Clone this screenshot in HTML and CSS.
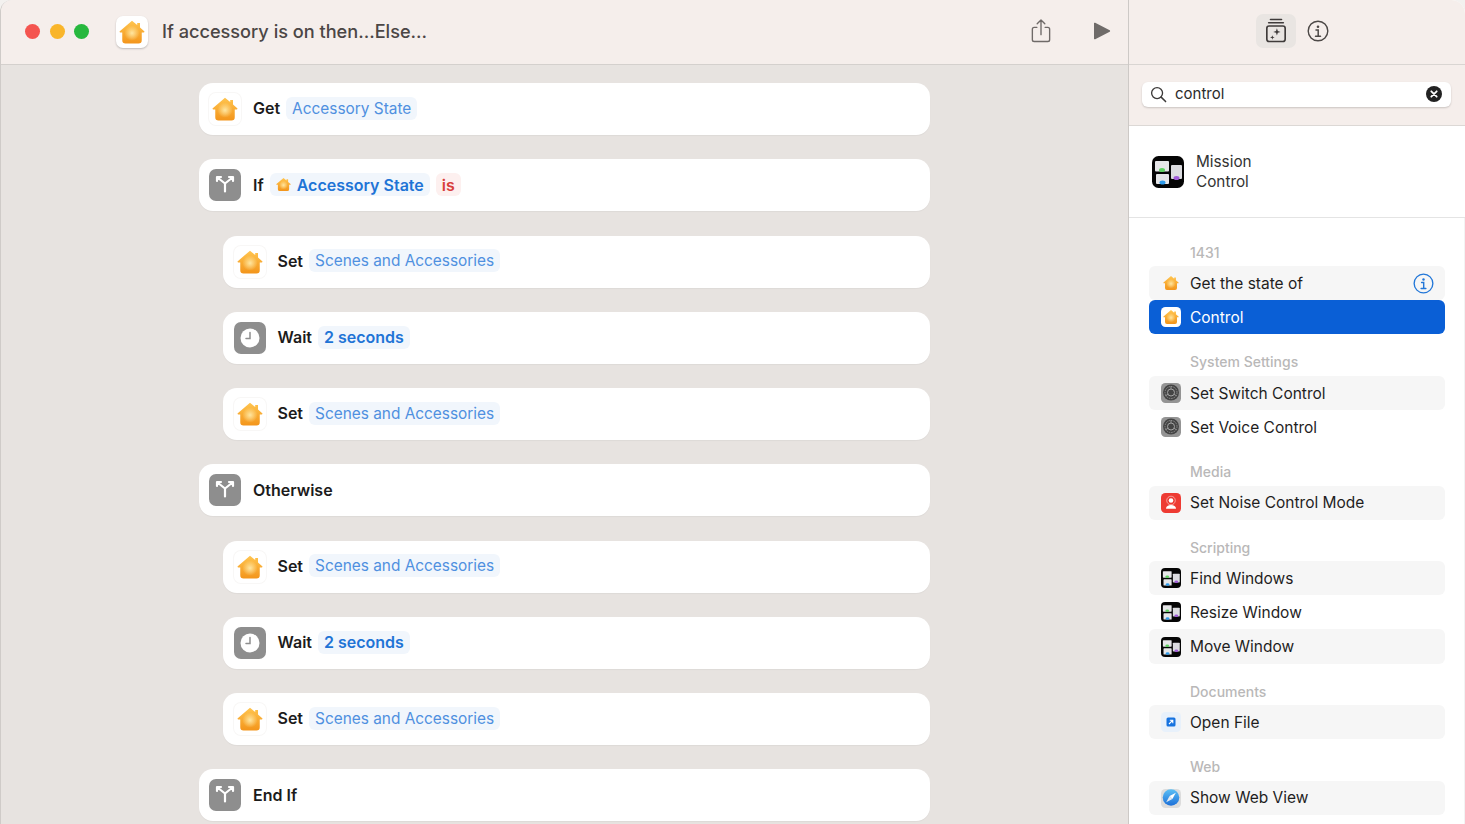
FILE: index.html
```html
<!DOCTYPE html>
<html lang="en">
<head>
<meta charset="utf-8">
<title>If accessory is on then...Else...</title>
<link rel="stylesheet" href="styles.css">
</head>
<body>
<svg class="sprite" aria-hidden="true">
  <defs>
    <linearGradient id="homeFill" x1="0" y1="0" x2="0" y2="1">
      <stop offset="0" stop-color="#ffc550"/>
      <stop offset="1" stop-color="#f3951b"/>
    </linearGradient>
    <radialGradient id="homeGlow" cx="0.5" cy="0.5" r="0.5">
      <stop offset="0" stop-color="#ffe6a0"/>
      <stop offset="1" stop-color="#ffe6a0" stop-opacity="0"/>
    </radialGradient>
    <linearGradient id="safariFill" x1="0" y1="0" x2="0" y2="1">
      <stop offset="0" stop-color="#5cc0f5"/>
      <stop offset="1" stop-color="#1c6fd8"/>
    </linearGradient>
  </defs>
  <symbol id="home" viewBox="0 0 24 24">
    <path fill="url(#homeFill)" d="M12 1.500 16.800 5.600V3.600h2.600v4.200l3.900 3.500a.7.7 0 0 1-.5 1.200H21V19.500a3 3 0 0 1-3 3H6a3 3 0 0 1-3-3v-7H1.200a.7.7 0 0 1-.5-1.200Z"/>
    <circle cx="12" cy="13" r="7" fill="url(#homeGlow)"/>
  </symbol>
  <symbol id="branch" viewBox="0 0 32 32">
    <path fill="none" stroke="#fff" stroke-width="2.200" stroke-linecap="round" stroke-linejoin="round" d="M16 22.500V14.500L8.500 8.500M16 14.500 23.500 8.500M8 12V8h4M24 12V8h-4"/>
  </symbol>
  <symbol id="clock" viewBox="0 0 32 32">
    <circle cx="16" cy="16" r="9.500" fill="#fff"/>
    <path fill="none" stroke="#8e8e8e" stroke-width="1.500" stroke-linecap="round" d="M16 10.500V16.500H12"/>
  </symbol>
  <symbol id="share" viewBox="0 0 22 28">
    <path fill="none" stroke="#6f6a68" stroke-width="1.500" stroke-linecap="round" stroke-linejoin="round" d="M6.500 10H3.500a2 2 0 0 0-2 2v11.500a2 2 0 0 0 2 2h15a2 2 0 0 0 2-2V12a2 2 0 0 0-2-2h-3M11 18V2M6.800 6 11 1.800 15.200 6"/>
  </symbol>
  <symbol id="library" viewBox="0 0 24 28">
    <g fill="none" stroke="#3f3b3a" stroke-width="1.800" stroke-linecap="round">
      <path d="M6 1.500h12M4 5h16"/>
      <rect x="2" y="8.500" width="20" height="17" rx="2.500"/>
    </g>
    <path fill="#3f3b3a" d="m13 11 1 3 3 1-3 1-1 3-1-3-3-1 3-1ZM8 18.500l.6 1.900 1.900.6-1.900.6-.6 1.900-.6-1.900-1.900-.6 1.900-.6Z"/>
  </symbol>
  <symbol id="info" viewBox="0 0 22 22">
    <circle cx="11" cy="11" r="9.800" fill="none" stroke="currentColor" stroke-width="1.400"/>
    <circle cx="11" cy="6.800" r="1.300" fill="currentColor"/>
    <path fill="none" stroke="currentColor" stroke-width="1.500" stroke-linecap="round" d="M9 10h2.200v6M8.500 16.200h5"/>
  </symbol>
  <symbol id="search" viewBox="0 0 18 18">
    <circle cx="7.500" cy="7.500" r="5.800" fill="none" stroke="#3c3a39" stroke-width="1.400"/>
    <path stroke="#3c3a39" stroke-width="1.600" stroke-linecap="round" d="m11.800 11.800 4.700 4.700"/>
  </symbol>
  <symbol id="clear" viewBox="0 0 16 16">
    <circle cx="8" cy="8" r="8" fill="#222"/>
    <path stroke="#fff" stroke-width="1.800" stroke-linecap="round" d="m5.300 5.300 5.400 5.400M10.700 5.300l-5.400 5.400"/>
  </symbol>
  <symbol id="mission" viewBox="0 0 32 32">
    <rect width="32" height="32" rx="6.500" fill="#050505"/>
    <rect x="3" y="5" width="14" height="10.500" rx="1" fill="#e6e6e8"/>
    <rect x="4" y="18" width="13" height="10" rx="1" fill="#e6e6e8"/>
    <rect x="19" y="9" width="11" height="14" rx="1" fill="#dcdce0"/>
    <ellipse cx="10" cy="14" rx="3" ry="2" fill="#5ed060"/>
    <ellipse cx="10.500" cy="26.500" rx="3" ry="2" fill="#2e9bea"/>
    <ellipse cx="24.500" cy="22" rx="3" ry="2" fill="#a05cd8"/>
  </symbol>
  <symbol id="gear" viewBox="0 0 20 20">
    <rect width="20" height="20" rx="4.500" fill="#949494"/>
    <circle cx="10" cy="9.500" r="8" fill="#444"/>
    <circle cx="10" cy="9.500" r="6" fill="none" stroke="#8e8e8e" stroke-width="1" stroke-dasharray="1.500 1"/>
    <circle cx="10" cy="9.500" r="3.500" fill="none" stroke="#a5a5a5" stroke-width="1"/>
    <path stroke="#a5a5a5" stroke-width=".8" d="M10 6V3M13 11.300l2.600 1.500M7 11.300l-2.600 1.500"/>
  </symbol>
  <symbol id="noise" viewBox="0 0 20 20">
    <rect width="20" height="20" rx="4.500" fill="#ee3b33"/>
    <circle cx="10" cy="7.500" r="2.300" fill="#fff"/>
    <circle cx="10" cy="7.500" r="4.300" fill="none" stroke="#fff" stroke-width=".7" opacity=".7"/>
    <path fill="#fff" d="M5 15.800c0-2.600 2.300-3.800 5-3.800s5 1.200 5 3.800Z"/>
  </symbol>
  <symbol id="file" viewBox="0 0 20 20">
    <rect width="20" height="20" rx="4.500" fill="#e8f1fb"/>
    <rect x="5.500" y="5.500" width="9" height="9" rx="1.500" fill="#1673e0"/>
    <path fill="none" stroke="#fff" stroke-width="1.100" d="M8 12l3.600-3.600M8.800 8.200h3v3"/>
  </symbol>
  <symbol id="safari" viewBox="0 0 20 20">
    <rect y="1" width="20" height="19" rx="4.500" fill="#dcdcdc"/>
    <circle cx="10" cy="9.500" r="8.300" fill="url(#safariFill)"/>
    <path fill="#fff" d="m14.800 4.700-3.400 6.200-2.800-2.800Z"/>
    <path fill="#e4e9f0" d="m5.200 14.300 3.400-6.200 2.800 2.800Z"/>
  </symbol>
</svg>

<div class="window">
  <section class="editor">
    <header class="titlebar">
      <div class="lights">
        <span class="light light-red"></span>
        <span class="light light-yellow"></span>
        <span class="light light-green"></span>
      </div>
      <span class="app-tile"><svg class="app-home"><use href="#home"/></svg></span>
      <h1 class="doc-title">If accessory is on then...Else...</h1>
      <div class="title-actions">
        <svg class="share-icon"><use href="#share"/></svg>
        <svg class="play-icon" viewBox="0 0 18 18"><path fill="#6f6b69" d="M1 1.500a.8.8 0 0 1 1.200-.7l14.500 7.500a.8.8 0 0 1 0 1.400L2.200 17.200A.8.8 0 0 1 1 16.500Z"/></svg>
      </div>
    </header>
    <main class="canvas">
      <div class="flow">
        <div class="card">
          <span class="tile tile-home"><svg class="tile-home-icon"><use href="#home"/></svg></span>
          <span class="verb">Get</span><span class="pill">Accessory State</span>
        </div>
        <div class="card">
          <span class="tile tile-grey"><svg class="tile-icon"><use href="#branch"/></svg></span>
          <span class="verb">If</span>
          <span class="pill pill-strong pill-var"><svg class="pill-home"><use href="#home"/></svg>Accessory State</span>
          <span class="pill pill-red">is</span>
        </div>
        <div class="card card-nested">
          <span class="tile tile-home"><svg class="tile-home-icon"><use href="#home"/></svg></span>
          <span class="verb">Set</span><span class="pill">Scenes and Accessories</span>
        </div>
        <div class="card card-nested">
          <span class="tile tile-grey"><svg class="tile-icon"><use href="#clock"/></svg></span>
          <span class="verb">Wait</span><span class="pill pill-strong">2 seconds</span>
        </div>
        <div class="card card-nested">
          <span class="tile tile-home"><svg class="tile-home-icon"><use href="#home"/></svg></span>
          <span class="verb">Set</span><span class="pill">Scenes and Accessories</span>
        </div>
        <div class="card">
          <span class="tile tile-grey"><svg class="tile-icon"><use href="#branch"/></svg></span>
          <span class="verb">Otherwise</span>
        </div>
        <div class="card card-nested">
          <span class="tile tile-home"><svg class="tile-home-icon"><use href="#home"/></svg></span>
          <span class="verb">Set</span><span class="pill">Scenes and Accessories</span>
        </div>
        <div class="card card-nested">
          <span class="tile tile-grey"><svg class="tile-icon"><use href="#clock"/></svg></span>
          <span class="verb">Wait</span><span class="pill pill-strong">2 seconds</span>
        </div>
        <div class="card card-nested">
          <span class="tile tile-home"><svg class="tile-home-icon"><use href="#home"/></svg></span>
          <span class="verb">Set</span><span class="pill">Scenes and Accessories</span>
        </div>
        <div class="card">
          <span class="tile tile-grey"><svg class="tile-icon"><use href="#branch"/></svg></span>
          <span class="verb">End If</span>
        </div>
      </div>
    </main>
  </section>

  <aside class="sidebar">
    <header class="side-toolbar">
      <span class="tool tool-active"><svg class="library-icon"><use href="#library"/></svg></span>
      <span class="tool"><svg class="tool-info"><use href="#info"/></svg></span>
    </header>
    <div class="search-area">
      <div class="search-box">
        <svg class="search-icon"><use href="#search"/></svg>
        <span class="search-text">control</span>
        <svg class="clear-icon"><use href="#clear"/></svg>
      </div>
    </div>
    <div class="app-result">
      <svg class="mission-icon"><use href="#mission"/></svg>
      <span class="app-name">Mission<br>Control</span>
    </div>
    <div class="results">
      <section class="group">
        <h2 class="group-label">1431</h2>
        <div class="row row-shade">
          <span class="row-tile"><svg class="row-home"><use href="#home"/></svg></span>
          <span class="row-text">Get the state of</span>
          <svg class="row-info"><use href="#info"/></svg>
        </div>
        <div class="row row-selected">
          <span class="row-tile row-tile-white"><svg class="row-home"><use href="#home"/></svg></span>
          <span class="row-text">Control</span>
        </div>
      </section>
      <section class="group">
        <h2 class="group-label">System Settings</h2>
        <div class="row row-shade">
          <svg class="row-icon"><use href="#gear"/></svg>
          <span class="row-text">Set Switch Control</span>
        </div>
        <div class="row">
          <svg class="row-icon"><use href="#gear"/></svg>
          <span class="row-text">Set Voice Control</span>
        </div>
      </section>
      <section class="group">
        <h2 class="group-label">Media</h2>
        <div class="row row-shade">
          <svg class="row-icon"><use href="#noise"/></svg>
          <span class="row-text">Set Noise Control Mode</span>
        </div>
      </section>
      <section class="group">
        <h2 class="group-label">Scripting</h2>
        <div class="row row-shade">
          <svg class="row-icon"><use href="#mission"/></svg>
          <span class="row-text">Find Windows</span>
        </div>
        <div class="row">
          <svg class="row-icon"><use href="#mission"/></svg>
          <span class="row-text">Resize Window</span>
        </div>
        <div class="row row-shade">
          <svg class="row-icon"><use href="#mission"/></svg>
          <span class="row-text">Move Window</span>
        </div>
      </section>
      <section class="group">
        <h2 class="group-label">Documents</h2>
        <div class="row row-shade">
          <svg class="row-icon"><use href="#file"/></svg>
          <span class="row-text">Open File</span>
        </div>
      </section>
      <section class="group">
        <h2 class="group-label">Web</h2>
        <div class="row row-shade">
          <svg class="row-icon"><use href="#safari"/></svg>
          <span class="row-text">Show Web View</span>
        </div>
      </section>
    </div>
  </aside>
</div>
</body>
</html>
```

FILE: styles.css
```css
* {
  box-sizing: border-box;
}

html,
body {
  margin: 0;
  height: 100%;
  overflow: hidden;
  background: #f3f1ef;
}

body {
  font-family: Inter, "Liberation Sans", sans-serif;
  color: #1f1e1e;
}

.sprite {
  display: block;
  width: 0;
  height: 0;
  overflow: hidden;
}

.window {
  display: flex;
  height: 824px;
  border-left: 1px solid #cfcbc8;
  border-radius: 12px 14px 0 0;
  overflow: hidden;
}

/* Editor column */
.editor {
  width: 1128px;
  display: flex;
  flex-direction: column;
  border-right: 1px solid #cdc9c6;
  flex: none;
}

.titlebar {
  height: 65px;
  flex: none;
  display: flex;
  align-items: center;
  padding: 0 17px 1px 24px;
  background: #f5eeeb;
  border-bottom: 1px solid #d4d0cd;
}

.lights {
  display: flex;
  gap: 9.500px;
  margin-right: 27px;
}

.light {
  width: 15px;
  height: 15px;
  border-radius: 50%;
}

.light-red { background: #f4544f; }
.light-yellow { background: #f9b52a; }
.light-green { background: #27b83e; }

.app-tile {
  width: 32px;
  height: 32px;
  display: flex;
  align-items: center;
  justify-content: center;
  background: #fff;
  border-radius: 7px;
  box-shadow: 0 1px 2px rgba(0, 0, 0, 0.22);
  margin-right: 14px;
}

.app-home {
  width: 26px;
  height: 26px;
}

.doc-title {
  margin: 0 0 1px;
  font-size: 18.150px;
  line-height: 24px;
  font-weight: 500;
  color: #4b4645;
  white-space: nowrap;
}

.title-actions {
  margin-left: auto;
  display: flex;
  align-items: center;
  gap: 42px;
}

.share-icon {
  width: 20px;
  height: 26px;
  margin-bottom: 2px;
}

.play-icon {
  width: 18px;
  height: 18px;
  margin-bottom: 1px;
}

.canvas {
  flex: 1;
  background: #e7e3e0;
  padding-top: 18px;
  overflow: hidden;
}

.flow {
  width: 731px;
  margin: 0 auto 0 198px;
  display: flex;
  flex-direction: column;
  gap: 24.250px;
}

.card {
  height: 52px;
  flex: none;
  display: flex;
  align-items: center;
  background: #fff;
  border-radius: 14px;
  padding: 0 10px;
  box-shadow: 0 1px 1px rgba(0, 0, 0, 0.04);
}

.card-nested {
  margin-left: 24px;
  padding-left: 10.500px;
}

.tile {
  width: 32px;
  height: 32px;
  border-radius: 7px;
  flex: none;
  display: flex;
  align-items: center;
  justify-content: center;
  margin-right: 12px;
}

.tile-grey { background: #8e8e8e; }

.tile-home {
  background: #fff;
  box-shadow: 0 0 0 1px #f8f7f6;
}

.tile-home-icon {
  width: 26px;
  height: 26px;
}

.tile-icon {
  width: 32px;
  height: 32px;
}

.verb {
  margin-bottom: 1.400px;
  font-size: 16px;
  line-height: 24px;
  font-weight: 600;
  color: #1c1b1b;
}

.pill {
  height: 23px;
  display: flex;
  align-items: center;
  margin: 0 0 1.400px 6px;
  padding: 0 6px;
  border-radius: 6px;
  background: #f1f6fc;
  font-size: 15.400px;
  color: #4f90e0;
  white-space: nowrap;
}

.pill-strong {
  font-size: 16px;
  color: #1f74d6;
  font-weight: 600;
}

.pill-var {
  gap: 6px;
}

.pill-red {
  font-size: 16px;
  background: #fdf0ef;
  color: #d8403c;
  font-weight: 600;
}

.pill-home {
  width: 15px;
  height: 15px;
}

/* Sidebar */
.sidebar {
  flex: 1;
  min-width: 0;
  display: flex;
  flex-direction: column;
  background: #fff;
}

.side-toolbar {
  height: 65px;
  flex: none;
  display: flex;
  align-items: center;
  justify-content: center;
  gap: 2px;
  padding: 0 0 2px;
  background: #f5eeeb;
  border-bottom: 1px solid #d9d5d2;
}

.tool {
  width: 40px;
  height: 34px;
  display: flex;
  align-items: center;
  justify-content: center;
  border-radius: 7px;
  color: #4d4947;
}

.tool-active { background: #e9e5e2; }

.library-icon {
  width: 22px;
  height: 26px;
}

.tool-info {
  width: 22px;
  height: 22px;
}

.search-area {
  height: 61px;
  flex: none;
  padding: 17px 14px 0 13px;
  background: #f5eeeb;
  border-bottom: 1px solid #dcd8d5;
}

.search-box {
  height: 24.500px;
  display: flex;
  align-items: center;
  padding: 0 9px 0 8px;
  background: #fff;
  border-radius: 6px;
  box-shadow: 0 1px 2px rgba(0, 0, 0, 0.18);
}

.search-icon {
  width: 17px;
  height: 17px;
  margin-right: 8px;
}

.search-text {
  margin-bottom: 1px;
  font-size: 15px;
  color: #2c2b2b;
}

.clear-icon {
  width: 16px;
  height: 16px;
  margin-left: auto;
}

.app-result {
  height: 92px;
  flex: none;
  display: flex;
  align-items: center;
  gap: 12px;
  padding: 0 0 0 23px;
  border-bottom: 1px solid #e4e4e4;
}

.mission-icon {
  width: 32px;
  height: 32px;
  flex: none;
}

.app-name {
  margin-top: 1px;
  font-size: 15.300px;
  line-height: 20px;
  color: #333;
}

.results {
  padding: 16px 19px 0 20px;
  display: flex;
  flex-direction: column;
  gap: 9.400px;
  border-right: 1px solid #f3f3f3;
  flex: 1;
}

.group-label {
  margin: 0;
  height: 32px;
  padding: 9.500px 0 0 41px;
  font-size: 14px;
  line-height: 18px;
  font-weight: 500;
  color: #b9b8b8;
}

.row {
  height: 34.200px;
  display: flex;
  align-items: center;
  padding: 0 12px;
  border-radius: 6px;
}

.row-shade { background: #f6f6f6; }

.row-selected {
  background: #0a5fd6;
  color: #fff;
}

.row-tile {
  width: 20px;
  height: 20px;
  flex: none;
  display: flex;
  align-items: center;
  justify-content: center;
  border-radius: 4.500px;
}

.row-tile-white { background: #fff; }

.row-home {
  width: 16px;
  height: 16px;
}

.row-icon {
  width: 20px;
  height: 20px;
  flex: none;
}

.row-text {
  margin: 1.500px 0 0 9px;
  font-size: 15.500px;
  line-height: 20px;
  white-space: nowrap;
}

.row-info {
  width: 21px;
  height: 21px;
  margin: 0 -1px 0 auto;
  color: #2277d8;
}
```
